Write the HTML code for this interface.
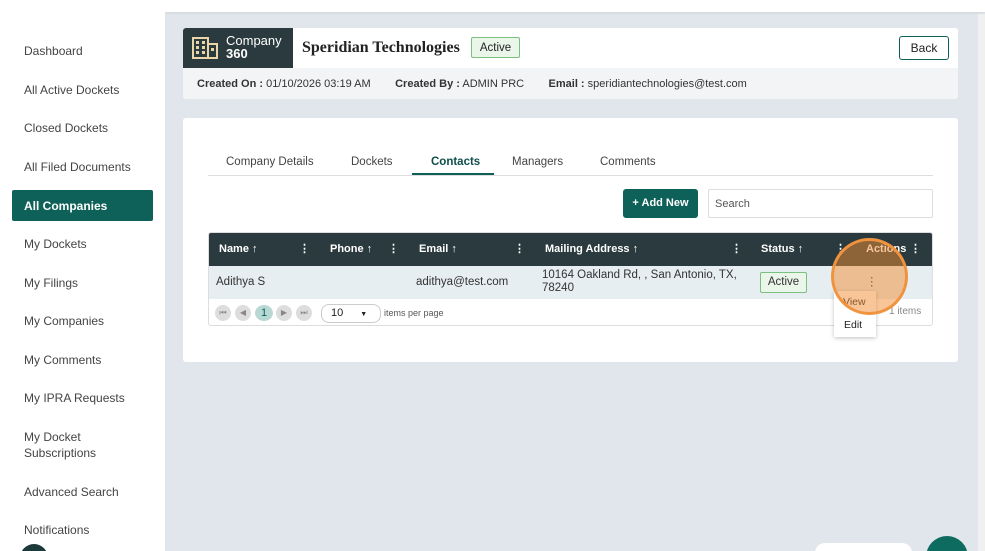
<!DOCTYPE html><html><head><style>
*{box-sizing:border-box;margin:0;padding:0}
html,body{width:985px;height:551px;overflow:hidden}
body{background:#e1e6ec;font-family:"Liberation Sans",sans-serif;position:relative;color:#333}
.top{position:absolute;left:0;top:0;width:985px;height:12px;background:#fff;box-shadow:0 1px 3px rgba(0,0,0,.08)}
.side{position:absolute;left:0;top:12px;width:165px;height:539px;background:#fff;overflow:hidden}
.side div{position:absolute;left:24px;font-size:12px;color:#444;line-height:16px}
.side .act{left:12px;width:141px;height:31px;background:#0e6158;color:#fff;font-weight:bold;padding:8px 12px;border-radius:2px}
.abs{position:absolute}
.card{background:#fff;border-radius:3px}
</style></head><body>
<div class="top"></div>
<div class="side">
<div style="top:31px">Dashboard</div>
<div style="top:70px">All Active Dockets</div>
<div style="top:108px">Closed Dockets</div>
<div style="top:147px">All Filed Documents</div>
<div class="act" style="top:178px">All Companies</div>
<div style="top:224px">My Dockets</div>
<div style="top:263px">My Filings</div>
<div style="top:301px">My Companies</div>
<div style="top:340px">My Comments</div>
<div style="top:378px">My IPRA Requests</div>
<div style="top:417px">My Docket<br>Subscriptions</div>
<div style="top:472px">Advanced Search</div>
<div style="top:510px">Notifications</div>
<div style="top:532px;left:20px;width:28px;height:28px;border-radius:50%;background:#1d3a3a"></div>
</div>
<div class="abs" style="left:978px;top:14px;width:7px;height:537px;background:#f0f0f0"></div>
<div class="abs card" style="left:183px;top:28px;width:775px;height:71px;overflow:hidden">
<div class="abs" style="left:0;top:0;width:110px;height:40px;background:#2b3a3e"></div>
<svg class="abs" style="left:9px;top:9px" width="26" height="22" viewBox="0 0 26 22"><rect x="1" y="1" width="15" height="20" fill="none" stroke="#e9d5a5" stroke-width="2"/><rect x="16" y="7" width="9" height="14" fill="none" stroke="#e9d5a5" stroke-width="2"/><g fill="#e9d5a5"><rect x="4" y="4" width="3" height="3"/><rect x="10" y="4" width="3" height="3"/><rect x="4" y="9" width="3" height="3"/><rect x="10" y="9" width="3" height="3"/><rect x="4" y="14" width="3" height="3"/><rect x="10" y="14" width="3" height="3"/><rect x="19" y="11" width="3" height="3"/></g></svg>
<div class="abs" style="left:43px;top:6px;color:#fff;font-size:13px;line-height:13px">Company<br><b>360</b></div>
<div class="abs" style="left:119px;top:11px;font-family:'Liberation Serif',serif;font-weight:bold;font-size:16px;color:#222">Speridian Technologies</div>
<div class="abs" style="left:288px;top:9px;width:49px;height:21px;border:1px solid #7bc07f;background:#eaf6ea;border-radius:2px;font-size:11.5px;text-align:center;line-height:21px;color:#222">Active</div>
<div class="abs" style="left:716px;top:8px;width:50px;height:24px;border:1px solid #0e6158;border-radius:3px;font-size:12px;text-align:center;line-height:22px;color:#222">Back</div>
<div class="abs" style="left:0;top:40px;width:775px;height:31px;background:#f3f4f6;font-size:11px;padding:9px 14px;line-height:14px;color:#333;white-space:nowrap"><b>Created On :</b> 01/10/2026 03:19 AM &nbsp;&nbsp;&nbsp;&nbsp;&nbsp;&nbsp;&nbsp;<b>Created By :</b> ADMIN PRC &nbsp;&nbsp;&nbsp;&nbsp;&nbsp;&nbsp;&nbsp;<b>Email :</b> speridiantechnologies@test.com</div>
</div>
<div class="abs card" style="left:183px;top:118px;width:775px;height:244px">
<div class="abs" style="left:25px;top:57px;width:725px;height:1px;background:#ddd"></div>
<div class="abs" style="left:43px;top:38px;font-size:11.5px;color:#444">Company Details</div>
<div class="abs" style="left:168px;top:38px;font-size:11.5px;color:#444">Dockets</div>
<div class="abs" style="left:248px;top:38px;font-size:11.5px;color:#0e4f4a;font-weight:bold">Contacts</div>
<div class="abs" style="left:229px;top:55px;width:82px;height:2px;background:#0e6158"></div>
<div class="abs" style="left:329px;top:38px;font-size:11.5px;color:#444">Managers</div>
<div class="abs" style="left:417px;top:38px;font-size:11.5px;color:#444">Comments</div>
<div class="abs" style="left:440px;top:71px;width:75px;height:29px;background:#0e6158;border-radius:3px;color:#fff;font-size:11px;font-weight:bold;text-align:center;line-height:29px">+ Add New</div>
<div class="abs" style="left:525px;top:71px;width:225px;height:29px;border:1px solid #ddd;border-radius:2px;font-size:11px;color:#555;padding:8px 6px">Search</div>
<div class="abs" style="left:25px;top:114px;width:725px;height:94px;border:1px solid #ddd;border-radius:3px;overflow:hidden">
<div class="abs" style="left:0;top:0;width:725px;height:33px;background:#2b3a3e;color:#fff;font-size:11px;font-weight:bold">
<span class="abs" style="left:10px;top:10px">Name ↑</span><span class="abs" style="left:90px;top:9px">⋮</span>
<span class="abs" style="left:121px;top:10px">Phone ↑</span><span class="abs" style="left:179px;top:9px">⋮</span>
<span class="abs" style="left:210px;top:10px">Email ↑</span><span class="abs" style="left:305px;top:9px">⋮</span>
<span class="abs" style="left:336px;top:10px">Mailing Address ↑</span><span class="abs" style="left:522px;top:9px">⋮</span>
<span class="abs" style="left:552px;top:10px">Status ↑</span><span class="abs" style="left:626px;top:9px">⋮</span>
<span class="abs" style="left:657px;top:10px">Actions</span><span class="abs" style="left:701px;top:9px">⋮</span></div>
<div class="abs" style="left:0;top:33px;width:725px;height:33px;background:#e6eef1;font-size:11.5px;color:#333">
<span class="abs" style="left:7px;top:10px">Adithya S</span>
<span class="abs" style="left:207px;top:10px">adithya@test.com</span>
<span class="abs" style="left:333px;top:3px;line-height:13px">10164 Oakland Rd, , San Antonio, TX,<br>78240</span>
<span class="abs" style="left:551px;top:6px;width:47px;height:21px;border:1px solid #7bc07f;background:#eaf6ea;border-radius:2px;text-align:center;line-height:19px">Active</span>
<span class="abs" style="left:657px;top:8px">⋮</span></div>
<div class="abs" style="left:6px;top:72px;font-size:8px;color:#888">
<span class="abs" style="left:0;width:16px;height:16px;border-radius:50%;background:#ddd;text-align:center;line-height:16px">⏮</span>
<span class="abs" style="left:20px;width:16px;height:16px;border-radius:50%;background:#ddd;text-align:center;line-height:16px">◀</span>
<span class="abs" style="left:40px;width:18px;height:16px;border-radius:50%;background:#b8d8d4;color:#0e6158;font-size:11px;text-align:center;line-height:16px">1</span>
<span class="abs" style="left:61px;width:16px;height:16px;border-radius:50%;background:#ddd;text-align:center;line-height:16px">▶</span>
<span class="abs" style="left:81px;width:16px;height:16px;border-radius:50%;background:#ddd;text-align:center;line-height:16px">⏭</span>
<span class="abs" style="left:106px;top:-1px;width:60px;height:19px;border:1px solid #ccc;border-radius:8px;font-size:11px;color:#222;padding:2px 9px">10 <span style="font-size:7px;margin-left:14px">▼</span></span>
<span class="abs" style="left:169px;top:3px;font-size:9px;color:#555;white-space:nowrap">items per page</span></div>
<span class="abs" style="left:680px;top:73px;font-size:10px;color:#888">1 items</span>
</div>
</div>
<div class="abs" style="left:834px;top:291px;width:42px;height:46px;background:#fff;box-shadow:0 1px 4px rgba(0,0,0,.25);font-size:10.5px;color:#222"><span class="abs" style="left:9px;top:5px">View</span><span class="abs" style="left:10px;top:28px">Edit</span></div>
<div class="abs" style="left:831px;top:238px;width:77px;height:77px;border-radius:50%;border:3px solid #f0933f;background:rgba(240,140,50,.5)"></div>
<div class="abs" style="left:815px;top:543px;width:97px;height:20px;border-radius:10px;background:#fff"></div>
<div class="abs" style="left:926px;top:536px;width:42px;height:42px;border-radius:50%;background:#0e6b60"></div>
</body></html>
